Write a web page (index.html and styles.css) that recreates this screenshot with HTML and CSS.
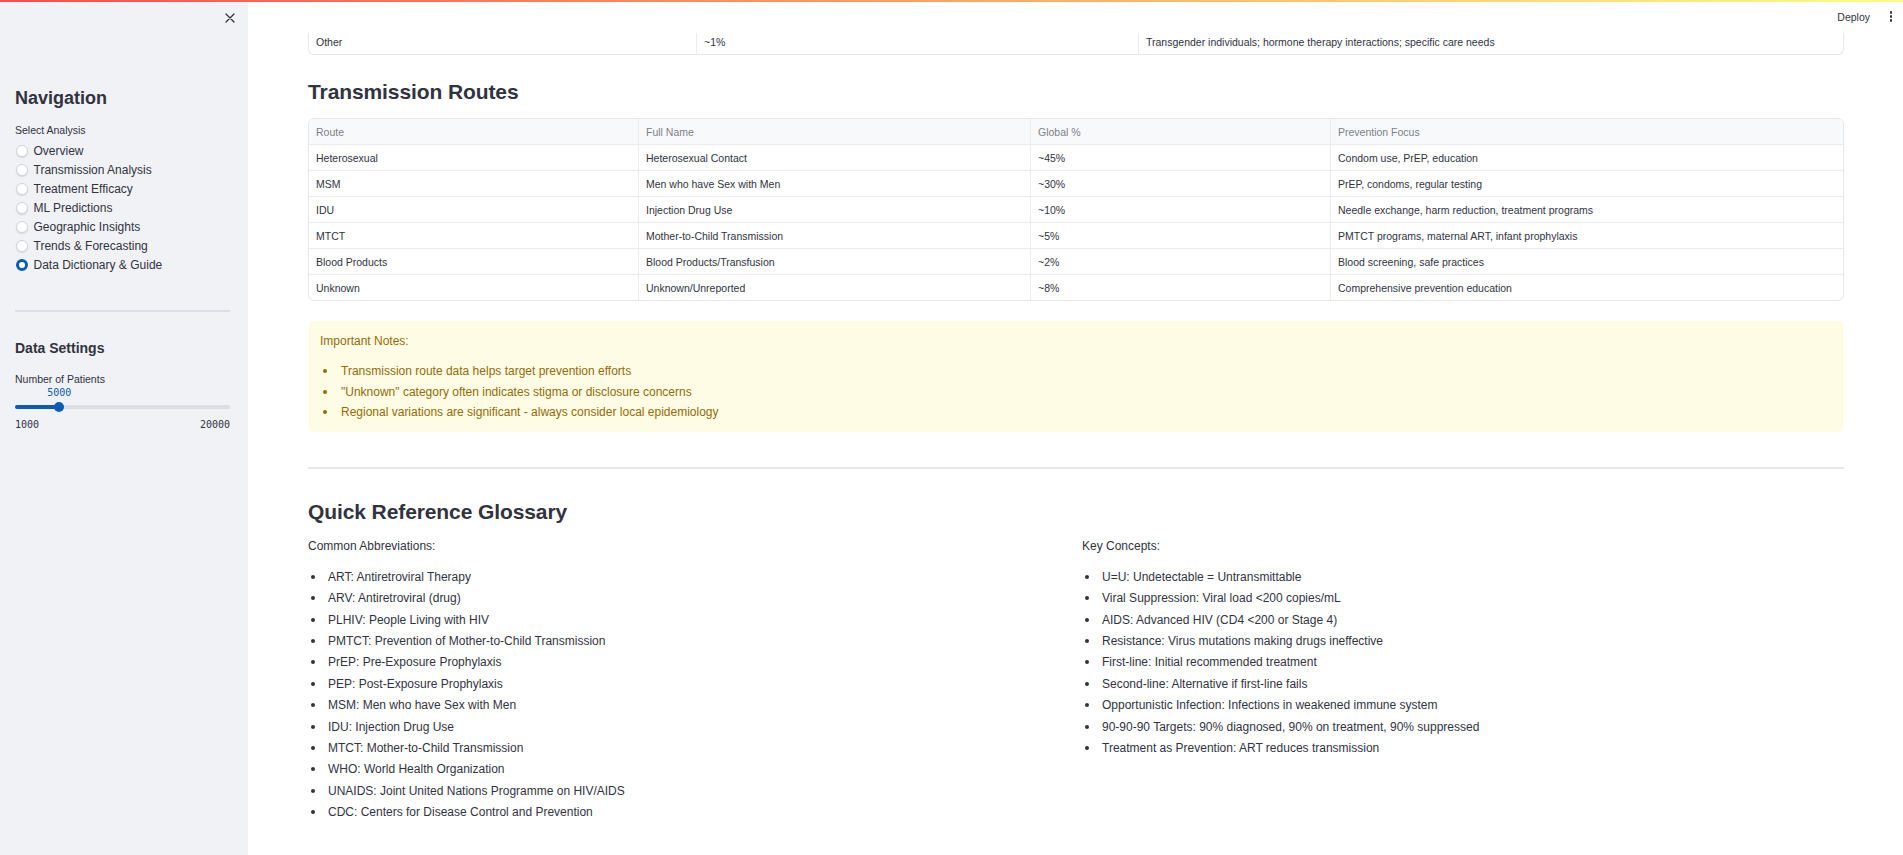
FILE: index.html
```html
<!DOCTYPE html>
<html lang="en">
<head>
<meta charset="utf-8">
<title>Data Dictionary &amp; Guide</title>
<link rel="stylesheet" href="styles.css">
</head>
<body>
<div class="decoration"></div>
<div class="app">
  <aside class="sidebar">
    <div class="sb-top">
      <button class="close-btn" aria-label="Close sidebar">
        <svg width="12" height="12" viewBox="0 0 12 12"><path d="M2 2 L10 10 M10 2 L2 10" stroke="#31333f" stroke-width="1.3" stroke-linecap="round" fill="none"/></svg>
      </button>
    </div>
    <h2 class="sb-title">Navigation</h2>
    <div class="sb-label">Select Analysis</div>
    <div class="radios">
      <div class="radio"><span class="dot"></span><span>Overview</span></div>
      <div class="radio"><span class="dot"></span><span>Transmission Analysis</span></div>
      <div class="radio"><span class="dot"></span><span>Treatment Efficacy</span></div>
      <div class="radio"><span class="dot"></span><span>ML Predictions</span></div>
      <div class="radio"><span class="dot"></span><span>Geographic Insights</span></div>
      <div class="radio"><span class="dot"></span><span>Trends &amp; Forecasting</span></div>
      <div class="radio"><span class="dot checked"></span><span>Data Dictionary &amp; Guide</span></div>
    </div>
    <hr class="sb-hr">
    <h3 class="sb-sub">Data Settings</h3>
    <div class="sb-label sb-label2">Number of Patients</div>
    <div class="slider">
      <div class="slider-value-row"><span class="slider-value" style="left: 44.3px">5000</span></div>
      <div class="track">
        <div class="track-fill" style="width: 44.3px"></div>
        <div class="thumb" style="left: 44.3px"></div>
      </div>
      <div class="minmax"><span>1000</span><span>20000</span></div>
    </div>
  </aside>

  <main class="main">
    <header class="topbar">
      <span class="deploy">Deploy</span>
      <span class="menu-dots"><i></i><i></i><i></i></span>
    </header>
    <div class="content">
      <div class="table tail">
        <div class="row">
          <div class="cell c-a">Other</div>
          <div class="cell c-b">~1%</div>
          <div class="cell c-c">Transgender individuals; hormone therapy interactions; specific care needs</div>
        </div>
      </div>

      <h3 class="h3 h3-first">Transmission Routes</h3>
      <div class="table routes">
        <div class="row head">
          <div class="cell r1">Route</div>
          <div class="cell r2">Full Name</div>
          <div class="cell r3">Global %</div>
          <div class="cell r4">Prevention Focus</div>
        </div>
        <div class="row">
          <div class="cell r1">Heterosexual</div>
          <div class="cell r2">Heterosexual Contact</div>
          <div class="cell r3">~45%</div>
          <div class="cell r4">Condom use, PrEP, education</div>
        </div>
        <div class="row">
          <div class="cell r1">MSM</div>
          <div class="cell r2">Men who have Sex with Men</div>
          <div class="cell r3">~30%</div>
          <div class="cell r4">PrEP, condoms, regular testing</div>
        </div>
        <div class="row">
          <div class="cell r1">IDU</div>
          <div class="cell r2">Injection Drug Use</div>
          <div class="cell r3">~10%</div>
          <div class="cell r4">Needle exchange, harm reduction, treatment programs</div>
        </div>
        <div class="row">
          <div class="cell r1">MTCT</div>
          <div class="cell r2">Mother-to-Child Transmission</div>
          <div class="cell r3">~5%</div>
          <div class="cell r4">PMTCT programs, maternal ART, infant prophylaxis</div>
        </div>
        <div class="row">
          <div class="cell r1">Blood Products</div>
          <div class="cell r2">Blood Products/Transfusion</div>
          <div class="cell r3">~2%</div>
          <div class="cell r4">Blood screening, safe practices</div>
        </div>
        <div class="row">
          <div class="cell r1">Unknown</div>
          <div class="cell r2">Unknown/Unreported</div>
          <div class="cell r3">~8%</div>
          <div class="cell r4">Comprehensive prevention education</div>
        </div>
      </div>

      <div class="notice">
        <p class="notice-title">Important Notes:</p>
        <ul class="list notice-list">
          <li>Transmission route data helps target prevention efforts</li>
          <li>"Unknown" category often indicates stigma or disclosure concerns</li>
          <li>Regional variations are significant - always consider local epidemiology</li>
        </ul>
      </div>

      <hr class="divider">

      <h3 class="h3 h3-second">Quick Reference Glossary</h3>
      <div class="columns">
        <div class="col">
          <p class="col-title">Common Abbreviations:</p>
          <ul class="list gloss">
            <li>ART: Antiretroviral Therapy</li>
            <li>ARV: Antiretroviral (drug)</li>
            <li>PLHIV: People Living with HIV</li>
            <li>PMTCT: Prevention of Mother-to-Child Transmission</li>
            <li>PrEP: Pre-Exposure Prophylaxis</li>
            <li>PEP: Post-Exposure Prophylaxis</li>
            <li>MSM: Men who have Sex with Men</li>
            <li>IDU: Injection Drug Use</li>
            <li>MTCT: Mother-to-Child Transmission</li>
            <li>WHO: World Health Organization</li>
            <li>UNAIDS: Joint United Nations Programme on HIV/AIDS</li>
            <li>CDC: Centers for Disease Control and Prevention</li>
          </ul>
        </div>
        <div class="col">
          <p class="col-title">Key Concepts:</p>
          <ul class="list gloss">
            <li>U=U: Undetectable = Untransmittable</li>
            <li>Viral Suppression: Viral load &lt;200 copies/mL</li>
            <li>AIDS: Advanced HIV (CD4 &lt;200 or Stage 4)</li>
            <li>Resistance: Virus mutations making drugs ineffective</li>
            <li>First-line: Initial recommended treatment</li>
            <li>Second-line: Alternative if first-line fails</li>
            <li>Opportunistic Infection: Infections in weakened immune system</li>
            <li>90-90-90 Targets: 90% diagnosed, 90% on treatment, 90% suppressed</li>
            <li>Treatment as Prevention: ART reduces transmission</li>
          </ul>
        </div>
      </div>
    </div>
  </main>
</div>
</body>
</html>
```

FILE: styles.css
```css
* { box-sizing: border-box; }

html, body {
  margin: 0;
  padding: 0;
  height: 100%;
}

body {
  font-family: "Liberation Sans", Arial, Helvetica, sans-serif;
  color: #31333f;
  background: #ffffff;
  overflow: hidden;
}

.decoration {
  position: fixed;
  top: 0;
  left: 0;
  right: 0;
  height: 2px;
  background: linear-gradient(90deg, #ff4b4b, #fffd80);
  z-index: 20;
}

.app {
  display: flex;
  height: 855px;
}

/* ---------- Sidebar ---------- */
.sidebar {
  flex: 0 0 248px;
  width: 248px;
  background: #f0f2f6;
  padding: 0 18px 0 15px;
}

.sb-top {
  height: 36px;
  display: flex;
  justify-content: flex-end;
  align-items: center;
  margin-right: -6px;
}

.close-btn {
  border: 0;
  background: transparent;
  padding: 0;
  width: 12px;
  height: 12px;
  display: flex;
}

.sb-title {
  margin: 50px 0 0;
  font-size: 18px;
  line-height: 24px;
  font-weight: 700;
}

.sb-label {
  margin-top: 13px;
  font-size: 10.5px;
  line-height: 14px;
}

.radios {
  margin-top: 4px;
  display: flex;
  flex-direction: column;
}

.radio {
  height: 19px;
  display: flex;
  align-items: center;
  gap: 5.5px;
  font-size: 12px;
}

.dot {
  width: 12px;
  height: 12px;
  margin-left: 1px;
  border-radius: 50%;
  background: #ffffff;
  border: 1px solid #d2d4da;
  box-shadow: 0 1px 1.5px rgba(0,0,0,0.12);
  flex: 0 0 12px;
}

.dot.checked {
  background: #ffffff;
  border: 3.5px solid #0b5cb5;
  box-shadow: none;
}

.sb-hr {
  margin: 36px 0 0;
  border: 0;
  height: 2px;
  background: #dcdee3;
}

.sb-sub {
  margin: 26px 0 0;
  font-size: 14px;
  line-height: 20px;
  font-weight: 700;
}

.sb-label2 {
  margin-top: 14px;
}

.slider {
  display: flex;
  flex-direction: column;
}

.slider-value-row {
  position: relative;
  height: 13px;
}

.slider-value {
  position: absolute;
  top: 0;
  transform: translateX(-50%);
  font-family: "DejaVu Sans Mono", "Liberation Mono", monospace;
  font-size: 10px;
  line-height: 13px;
  color: #0b5cb5;
}

.track {
  position: relative;
  margin-top: 6px;
  height: 4px;
  border-radius: 2px;
  background: #dcdee3;
}

.track-fill {
  height: 4px;
  border-radius: 2px;
  background: #0b5cb5;
}

.thumb {
  position: absolute;
  top: -3px;
  width: 10px;
  height: 10px;
  margin-left: -5px;
  border-radius: 50%;
  background: #0b5cb5;
}

.minmax {
  margin-top: 9px;
  display: flex;
  justify-content: space-between;
  font-family: "DejaVu Sans Mono", "Liberation Mono", monospace;
  font-size: 10px;
  line-height: 13px;
  color: #31333f;
}

/* ---------- Main ---------- */
.main {
  flex: 1;
  position: relative;
  overflow: hidden;
}

.topbar {
  position: absolute;
  top: 0;
  left: 0;
  right: 0;
  height: 33px;
  background: #ffffff;
  z-index: 5;
  display: flex;
  justify-content: flex-end;
  align-items: center;
  gap: 20px;
  padding-right: 10px;
}

.deploy {
  font-size: 10.5px;
  color: #31333f;
}

.menu-dots {
  display: flex;
  flex-direction: column;
  gap: 1.8px;
  width: 3px;
}

.menu-dots i {
  display: block;
  width: 2.4px;
  height: 2.4px;
  border-radius: 50%;
  background: #31333f;
}

.content {
  padding: 29px 59px 0 60px;
}

/* tables */
.table {
  border: 1px solid #e6e7eb;
  border-radius: 6px;
  overflow: hidden;
  font-size: 10.5px;
}

.table.tail {
  border-top: 0;
  border-radius: 0 0 6px 6px;
}

.row {
  display: flex;
  height: 26px;
  border-bottom: 1px solid #ebecef;
}

.row:last-child {
  border-bottom: 0;
  height: 25px;
}

.cell {
  display: flex;
  align-items: center;
  padding: 0 7px;
  border-right: 1px solid #ebecef;
  white-space: nowrap;
  overflow: hidden;
}

.cell:last-child {
  border-right: 0;
}

.c-a { width: 388px; }
.c-b { width: 442px; }
.c-c { flex: 1; }

.r1 { width: 330px; }
.r2 { width: 392px; }
.r3 { width: 300px; }
.r4 { flex: 1; }

.row.head {
  background: #f8f9fb;
  color: #7d7f89;
}

.h3 {
  margin: 0;
  font-size: 21px;
  line-height: 30px;
  font-weight: 700;
  letter-spacing: -0.1px;
}

.h3-first { margin-top: 22px; }

.routes { margin-top: 11px; }

/* notice */
.notice {
  margin-top: 20px;
  background: #fffce6;
  border-radius: 6px;
  padding: 12px 12px 10px;
  color: #926c05;
}

.notice-title {
  margin: 0;
  font-size: 12px;
  line-height: 17px;
}

.list {
  list-style: none;
  margin: 0;
  padding: 0;
}

.list li {
  display: flex;
  align-items: center;
  font-size: 12px;
}

.list li::before {
  content: "";
  flex: 0 0 4px;
  width: 4px;
  height: 4px;
  border-radius: 50%;
  background: currentColor;
  margin: 0 14px 0 3px;
}

.notice-list { margin-top: 11px; }
.notice-list li { height: 20.4px; }

.divider {
  margin: 35px 0 0;
  border: 0;
  height: 2px;
  background: #e8e8ea;
}

.h3-second { margin-top: 28px; }

.columns {
  margin-top: 10px;
  display: grid;
  grid-template-columns: 1fr 1fr;
  column-gap: 12px;
}

.col-title {
  margin: 0;
  font-size: 12px;
  line-height: 18px;
}

.gloss { margin-top: 11px; }
.gloss li { height: 21.4px; }
.gloss li::before { margin: 0 13px 0 3px; }
```
